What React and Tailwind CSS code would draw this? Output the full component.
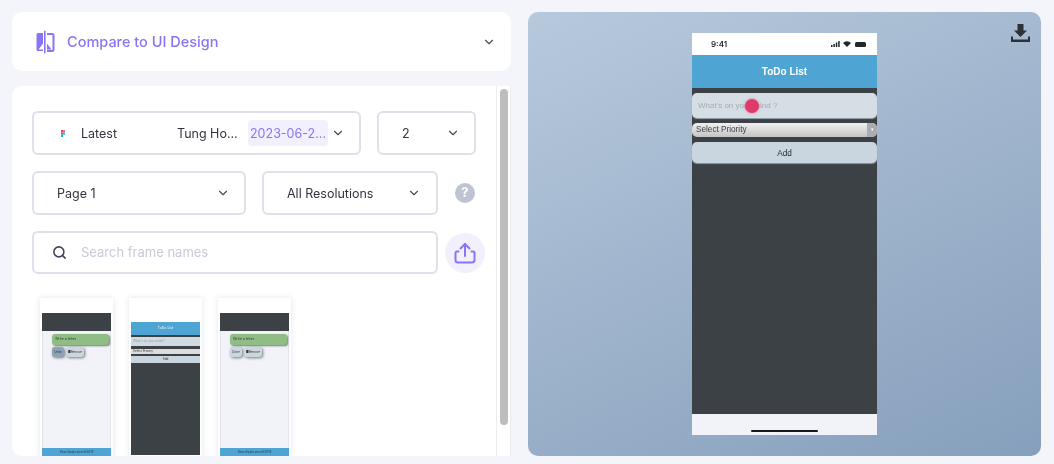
import { ChevronDown, Search } from 'lucide-react';

function CompareIcon() {
  return (
    <svg width="20" height="24" viewBox="0 0 20 24" fill="none">
      <path d="M8 3H3a1.5 1.5 0 0 0-1.5 1.5v15A1.5 1.5 0 0 0 3 21h5z" fill="#8b74f4" />
      <path d="M3.5 19.5 8 13.5v6z" fill="#fff" />
      <rect x="9" y="0.5" width="1.6" height="23" rx="0.8" fill="#8b74f4" />
      <path d="M12 4h5a1.5 1.5 0 0 1 1.5 1.5v14A1.5 1.5 0 0 1 17 21h-5" stroke="#8b74f4" strokeWidth="2" />
      <path d="M12 19.5V13.5l4.5 6z" fill="#8b74f4" />
    </svg>
  );
}

function FigmaMark() {
  return (
    <svg width="4" height="7" viewBox="0 0 4 7">
      <rect x="0" y="0" width="2" height="2.4" fill="#f24e1e" />
      <rect x="2" y="0" width="2" height="2.4" fill="#ff7262" />
      <rect x="0" y="2.4" width="2" height="2.3" fill="#a259ff" />
      <rect x="2" y="2.4" width="2" height="2.3" fill="#1abcfe" />
      <rect x="0" y="4.7" width="2" height="2.3" fill="#0acf83" />
    </svg>
  );
}

function UploadIcon() {
  return (
    <svg width="22" height="22" viewBox="0 0 22 22" fill="none" stroke="#8b74f4" strokeWidth="2" strokeLinecap="round" strokeLinejoin="round">
      <path d="M11 14V2" />
      <path d="M6.5 6.5 11 2l4.5 4.5" />
      <path d="M4.5 9.5H3a1.5 1.5 0 0 0-1.5 1.5v7A2.5 2.5 0 0 0 4 20.5h14a2.5 2.5 0 0 0 2.5-2.5v-7A1.5 1.5 0 0 0 19 9.5h-1.5" />
    </svg>
  );
}

function DownloadIcon() {
  return (
    <svg width="19" height="18" viewBox="0 0 19 18" fill="#2c3238">
      <path d="M6.5 0h6v6.500h3.500l-6.500 6.500-6.500-6.500h3.500z" />
      <path d="M0 12.500h2v3h15v-3h2v5.500H0z" />
    </svg>
  );
}

function StatusIcons() {
  return (
    <div className="flex items-center gap-[3px]">
      <svg width="9" height="6" viewBox="0 0 9 6" fill="#23272b">
        <rect x="0" y="4" width="1.5" height="2" />
        <rect x="2.4" y="3" width="1.5" height="3" />
        <rect x="4.8" y="1.5" width="1.5" height="4.5" />
        <rect x="7.2" y="0" width="1.5" height="6" />
      </svg>
      <svg width="8" height="6" viewBox="0 0 8 6" fill="#23272b">
        <path d="M4 6 0 2a5.700 5.700 0 0 1 8 0z" />
      </svg>
      <div className="ml-[1px] h-[5px] w-[11px] rounded-[1.5px] bg-[#23272b]" />
    </div>
  );
}

// miniature of the todo list frames in the left list
function ListThumb({ undoClass, undo }) {
  return (
    <div className="flex h-[159px] w-[73px] shrink-0 flex-col bg-white px-[2px] pt-[15px] shadow-[0_0_6px_rgba(60,70,90,0.14)]">
      <div className="h-[18px] shrink-0 bg-[#3c4145]" />
      <div className="flex flex-1 flex-col border-x border-[#e2e4ec] bg-[#f2f3f9] pl-[9px] pr-[1px] pt-[3px]">
        <div className="flex h-[11px] items-center rounded-[3px] bg-[#8fbd85] pl-[3px] text-[3.5px] text-[#333] shadow-[1px_1px_2px_#777]">
          Write a letter
        </div>
        <div className="mt-[2px] flex gap-[2px]">
          <div className={`flex h-[10px] w-[12px] items-center justify-center rounded-[3px] text-[3px] text-[#333] shadow-[1px_1px_3px_#777] ${undoClass}`}>
            {undo}
          </div>
          <div className="flex h-[10px] w-[18px] items-center justify-center rounded-[3px] bg-[#cbd7e0] text-[3px] text-[#333] shadow-[1px_1px_3px_#777]">
            ■Remove
          </div>
        </div>
      </div>
      <div className="flex h-[9px] shrink-0 items-center justify-center bg-[#4ea5d4] text-[3px] text-[#2c4050]">
        ReactApplication©2019
      </div>
    </div>
  );
}

function FormThumb() {
  return (
    <div className="flex h-[159px] w-[73px] shrink-0 flex-col bg-white px-[2px] pt-[24px] shadow-[0_0_6px_rgba(60,70,90,0.14)]">
      <div className="flex h-[13px] shrink-0 items-center justify-center bg-[#4ea5d4] text-[3.5px] text-white">
        ToDo List
      </div>
      <div className="flex h-[120px] flex-col bg-[#3c4145] pt-[1.5px]">
        <div className="flex h-[9px] items-center bg-[#d0dae1] pl-[2px] text-[3px] text-[#999]">What's on your mind ?</div>
        <div className="mt-[3px] flex h-[5px] items-center bg-[#dcdcdc] pl-[2px] text-[3px] text-[#333]">Select Priority</div>
        <div className="mt-[2px] flex h-[7px] items-center justify-center bg-[#c9d6df] text-[3px] text-[#333]">Add</div>
      </div>
    </div>
  );
}

export default function App() {
  return (
    <div className="flex h-[464px] w-[1054px] gap-[17px] overflow-hidden bg-[#f4f5fa] pb-[8px] pl-[12px] pr-[13px] pt-[12px] font-['Inter',sans-serif] blur-[0.3px]">
      {/* Left column */}
      <div className="flex w-[499px] shrink-0 flex-col gap-[15px]">
        <div className="flex h-[59px] shrink-0 items-center justify-between rounded-[10px] bg-white pl-[23px] pr-[15px]">
          <div className="flex items-center gap-[12px]">
            <CompareIcon />
            <span className="text-[14.5px] font-medium text-[#8b74f4]">Compare to UI Design</span>
          </div>
          <ChevronDown size={14} strokeWidth={2} className="text-[#4a4a5e]" />
        </div>

        <div className="flex min-h-0 flex-1 overflow-hidden rounded-l-[10px] bg-white">
          <div className="flex min-w-0 flex-1 flex-col pl-[20px] pr-[9px] pt-[25px]">
            {/* Version row */}
            <div className="flex gap-[16px]">
              <div className="flex h-[44px] w-[329px] items-center rounded-[6px] border-2 border-[#dfe0ea] pl-[27px] text-[12.5px] text-[#33333f]">
                <FigmaMark />
                <span className="ml-[16px] w-[96px] pt-[2px]">Latest</span>
                <span className="w-[71px] pt-[2px]">Tung Ho...</span>
                <span className="flex h-[26px] w-[80px] items-center justify-center rounded-[4px] bg-[#f3f0fd] pt-[2px] text-[#8b74f4]">2023-06-2...</span>
                <ChevronDown size={14} className="ml-[3px] text-[#4a4a5e]" />
              </div>
              <div className="flex h-[44px] w-[99px] items-center justify-between rounded-[6px] border-2 border-[#dfe0ea] pl-[23px] pr-[14px] text-[12.5px] text-[#33333f]">
                <span className="pt-[2px]">2</span>
                <ChevronDown size={14} className="text-[#4a4a5e]" />
              </div>
            </div>

            {/* Page + resolution */}
            <div className="mt-[16px] flex items-center gap-[16px]">
              <div className="flex h-[44px] w-[214px] items-center justify-between rounded-[6px] border-2 border-[#dfe0ea] pl-[23px] pr-[14px] text-[12.5px] text-[#33333f]">
                <span className="pt-[2px]">Page 1</span>
                <ChevronDown size={14} className="text-[#4a4a5e]" />
              </div>
              <div className="flex h-[44px] w-[176px] items-center justify-between rounded-[6px] border-2 border-[#dfe0ea] pl-[23px] pr-[15px] text-[12.5px] text-[#33333f]">
                <span className="pt-[2px]">All Resolutions</span>
                <ChevronDown size={14} className="text-[#4a4a5e]" />
              </div>
              <div className="ml-px flex h-[20px] w-[20px] items-center justify-center rounded-full bg-[#bfc3d4] text-[13px] font-bold text-white">?</div>
            </div>

            {/* Search */}
            <div className="mt-[16px] flex items-center gap-[7px]">
              <div className="flex h-[43px] w-[406px] shrink-0 items-center rounded-[6px] border-2 border-[#dfe0ea] pl-[18px] text-[13px] text-[#c9cadb]">
                <Search size={15} strokeWidth={2.5} className="text-[#44445a]" />
                <span className="ml-[14px]">Search frame names</span>
              </div>
              <div className="flex h-[40px] w-[40px] shrink-0 items-center justify-center rounded-full bg-[#f3f0fd]">
                <UploadIcon />
              </div>
            </div>

            {/* Frames */}
            <div className="ml-[8px] mt-[24px] flex gap-[16px] blur-[0.4px]">
              <ListThumb undo="Undo" undoClass="bg-[#8ea3b5]" />
              <FormThumb />
              <ListThumb undo="Done" undoClass="bg-[#cbd7e0]" />
            </div>
          </div>

          {/* Scrollbar */}
          <div className="w-[15px] shrink-0 border-x border-[#ececf0] bg-white pl-[3px] pt-[3px]">
            <div className="h-[336px] w-[8px] rounded-full bg-[#bdbdbd]" />
          </div>
        </div>
      </div>

      {/* Preview */}
      <div className="relative flex flex-1 justify-center rounded-[10px] bg-[linear-gradient(155deg,#b7c9dc,#869fbc)] pt-[21px]">
        <div className="absolute right-[11px] top-[12px]">
          <DownloadIcon />
        </div>
        <div className="flex h-[402px] w-[185px] flex-col bg-[#3c4145] font-['Liberation_Sans',sans-serif]">
          <div className="flex h-[22px] shrink-0 items-center justify-between bg-white pl-[19px] pr-[11px] font-['Inter',sans-serif] text-[8px] font-semibold text-[#23272b]">
            <span>9:41</span>
            <StatusIcons />
          </div>
          <div className="flex h-[33px] shrink-0 items-center justify-center bg-[#4ea5d4] text-[10px] font-bold text-white">
            ToDo List
          </div>
          <div className="relative mt-[5px] flex h-[25px] shrink-0 items-center rounded-[5px] bg-[#d5dee4] pl-[6px] text-[8px] text-[#a5acb3] shadow-[0_1px_1px_#9aa4ac]">
            What's on your mind ?
            <div className="absolute left-[53px] top-[5.5px] h-[14px] w-[14px] rounded-full bg-[#e03a6a] shadow-[0_0_3px_rgba(224,58,106,0.6)]" />
          </div>
          <div className="mt-[5px] flex h-[14px] shrink-0 items-center justify-between overflow-hidden rounded-[5px] bg-[linear-gradient(#f0f0f0,#c4c4c4)] pl-[4px] text-[8.2px] text-[#3a3f44]">
            <span className="pt-px">Select Priority</span>
            <div className="flex h-full w-[10px] items-center justify-center bg-[#a9adb0] text-[5px] text-white">▾</div>
          </div>
          <div className="mt-[5px] flex h-[21px] shrink-0 items-center justify-center rounded-[5px] bg-[#c9d6df] pt-[3px] text-[8.2px] text-[#23272b] shadow-[0_1px_1px_#8e99a2]">
            Add
          </div>
          <div className="flex-1" />
          <div className="flex h-[21px] shrink-0 flex-col items-center justify-end bg-[#f2f3f9] pb-[3px]">
            <div className="h-[2px] w-[67px] rounded-full bg-[#15181b]" />
          </div>
        </div>
      </div>
    </div>
  );
}
